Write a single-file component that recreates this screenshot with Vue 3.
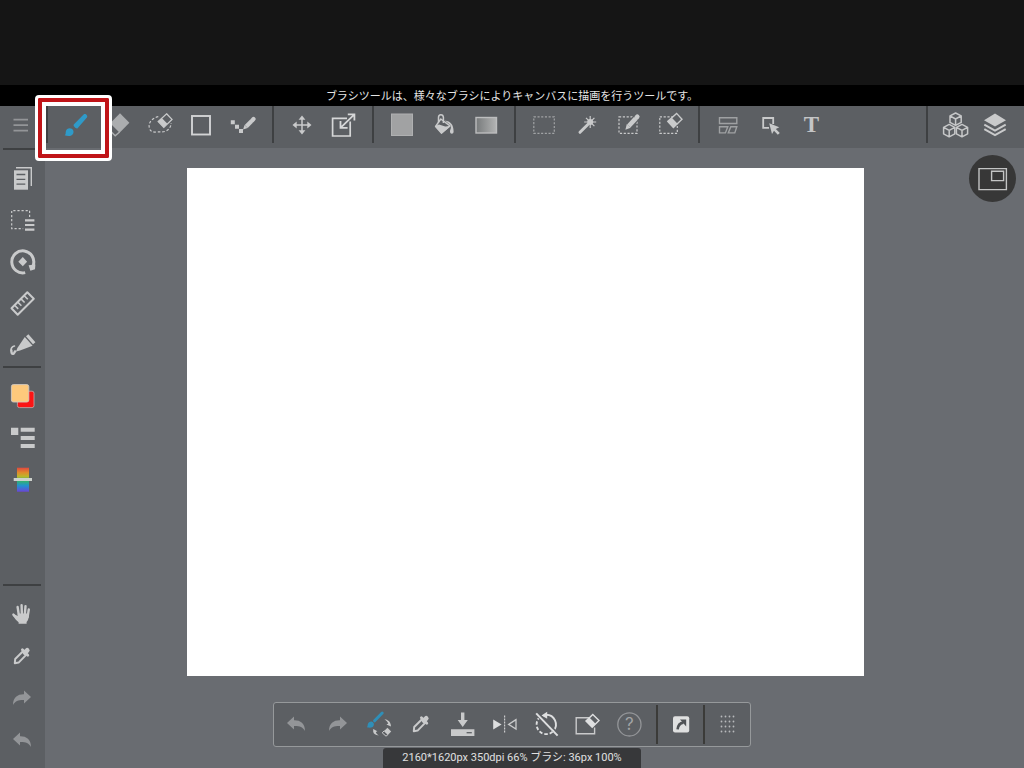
<script setup>
const L = '#c9cacb'
const M = '#abadaf'
const D = '#939598'
const BG = '#5c5f63'

const undoShape = `<path fill="${D}" d="M-9 -1 L-2 -7.5 V-3.8 C4 -4 9 -1 9 7 C7 3 3 1.8 -2 2 V5.5Z"/>`
const dropper = `<path fill="none" stroke="${L}" stroke-width="2" stroke-linejoin="round" d="M-7.2 7.2 L-6.8 3 L1 -4.8 L4.4 -1.4 L-3.4 6.6 Z"/><path stroke="${L}" stroke-width="2.8" stroke-linecap="round" d="M.4 -6.2 L5.8 -.8"/><path stroke="${L}" stroke-width="4.8" stroke-linecap="round" d="M3 -3.4 L5.2 -5.6"/>`
const brush = `<path fill="#2f9ac8" d="M7.6 -10.6 C9.4 -12 12.2 -9.4 10.9 -7.6 L1.6 3.2 C.3 4.4 -3.4 .9 -2.2 -.4Z"/><path fill="#2f9ac8" d="M-6.2 3.2 C-3.4 3.3 -1.6 6 -2.8 8.4 C-4.4 11.6 -8 11.4 -11.4 10.3 C-9.8 9.2 -10.6 8.2 -10.2 6.4 C-9.7 4.3 -8.2 3.2 -6.2 3.2Z"/>`
const cube = (x, y) => `<path transform="translate(${x} ${y})" d="M0 -6 L5.6 -3.1 V3.4 L0 6.4 L-5.6 3.4 V-3.1Z M-5.6 -3.1 L0 0 L5.6 -3.1 M0 0 V6.4"/>`
const dotGrid = [-5, -1, 3, 7].map(x => [-7, -2, 3, 8].map(y => `<circle cx="${x - 1.5}" cy="${y - .5}" r=".9"/>`).join('')).join('')

const icons = {
  menu: `<path stroke="${D}" stroke-width="1.7" d="M-6.5 -5.3 H8 M-6.5 .2 H8 M-6.5 5.6 H8"/>`,
  brush,
  eraser: `<path fill="none" stroke="${M}" stroke-width="1.5" d="M-7 -1.8 L-11 2.5 L-2.8 10.8 L1.6 7"/><path fill="${M}" d="M2 -11.7 L11.4 -2.3 L1.6 7.7 L-7.8 -1.7Z"/>`,
  lassoEraser: `<path fill="none" stroke="${L}" stroke-width="1.2" stroke-dasharray="2.6 1.8" d="M-1.7 -8.3 C-8 -7 -11.5 -2.5 -10.8 2 C-10.5 4.6 -9 7.6 -4 7 C-1 6.5 2 7.6 5 6.4 C9 5 11.2 1.6 11 -2"/><path fill="${BG}" stroke="${L}" stroke-width="1.3" d="M6.6 -11.2 L12 -5.6 L3.8 2.4 L-1.8 -3.4Z"/><path fill="${L}" d="M1.8 -6.9 L7.4 -1.2 L3.8 2.4 L-1.8 -3.4Z"/>`,
  rect: `<rect x="-10" y="-9" width="18" height="18.5" fill="none" stroke="#d2d3d4" stroke-width="1.9"/>`,
  polyline: `<path fill="${L}" d="M-13.2 -4.7h4v4h-4z M-9 -.3h4v4h-4z M-5 4h4v4h-4z"/><path stroke="${L}" stroke-width="4.2" d="M2.2 1.4 L7.4 -3.8"/><path stroke="${L}" stroke-width="4.2" stroke-linecap="round" d="M8.2 -4.6 L9.5 -5.9"/><path fill="${L}" d="M.5 0 L3.6 3 L-.9 4.4Z"/>`,
  move: `<path stroke="${L}" stroke-width="1.5" d="M-7 0H7M0 -7V7"/><path fill="${L}" d="M-9.5 0l4.2-3.4v6.8zM9.5 0l-4.2-3.4v6.8zM0-9.5l-3.4 4.2h6.8zM0 9.5l-3.4-4.2h6.8z"/>`,
  resize: `<path fill="none" stroke="#d6d7d8" stroke-width="1.7" d="M3 -6.6 H-11.4 V11 H6.2 V-3.5"/><path fill="none" stroke="#d6d7d8" stroke-width="1.8" d="M-3.5 2.8 L10.4 -10.6 M-3.5 -4 V2.9 H3.6 M3.8 -10.6 H10.4 V-4.4"/>`,
  fill: `<rect x="-10.5" y="-11" width="21" height="21.5" fill="#a1a2a3" stroke="#afb0b1"/>`,
  bucket: `<path fill="none" stroke="${L}" stroke-width="1.5" stroke-linejoin="round" d="M-3.2 -6 L6 .9 L-2.6 8 L-8.4 1.4Z"/><path fill="${L}" d="M-8.8 1 L-5 -.4 L1.2 1.6 L6.5 1 L-2.4 9 Z"/><path fill="none" stroke="${L}" stroke-width="1.5" d="M-5.5 -2.4 V-7.6 C-5.5 -11.3 -.8 -11.3 -.6 -7.6 V-2"/><path fill="${L}" d="M1 -4.6 C6.5 -3.6 9.6 -1 9.6 6.6 C9.6 9.6 6 9.6 6 6.6 C6 4.6 7.5 3.4 6.6 .2Z"/>`,
  gradient: `<defs><linearGradient id="grayRamp"><stop stop-color="#777a7b"/><stop offset="1" stop-color="#b3b4b4"/></linearGradient></defs><rect x="-10" y="-7.5" width="20.5" height="15.5" fill="url(#grayRamp)" stroke="#bcbdbe" stroke-width="1.4"/>`,
  select: `<rect x="-10.2" y="-8.2" width="20.5" height="16.5" fill="none" stroke="#a1a3a5" stroke-width="1.2" stroke-dasharray="2.1 1.6"/>`,
  wand: `<path stroke="${L}" stroke-width="3" stroke-linecap="round" d="M-6 7.3 L1.6 -.3"/><circle cx="4.2" cy="-3" r="3" fill="${L}"/><path stroke="${L}" stroke-width="1.2" d="M4.2 -9V3M-1.8 -3H10.2M0 -7.2L8.4 1.2M8.4 -7.2L0 1.2"/>`,
  selectPen: `<rect x="-9" y="-8.2" width="18" height="16.5" fill="none" stroke="${L}" stroke-width="1.2" stroke-dasharray="2.2 1.6"/><path stroke="${BG}" stroke-width="7" d="M-1 3 L10 -9"/><path stroke="${L}" stroke-width="4.6" d="M.8 1 L7.6 -6.4"/><path stroke="${L}" stroke-width="4.6" stroke-linecap="round" d="M8.6 -7.5 L9.3 -8.3"/><path fill="${L}" d="M-1.2 -.9 L2.7 2.7 L-2.6 4.8Z"/>`,
  selectEraser: `<rect x="-10.2" y="-8.2" width="17.5" height="16.5" fill="none" stroke="${L}" stroke-width="1.2" stroke-dasharray="2.2 1.6"/><path fill="${BG}" stroke="${L}" stroke-width="1.4" d="M6.6 -11.6 L12 -5.7 L3.4 2.6 L-2.2 -3.6Z"/><path fill="${L}" d="M1.8 -7.2 L7.6 -1.2 L3.4 3.1 L-2.7 -3.2Z"/>`,
  panels: `<path fill="none" stroke="#9fa1a3" stroke-width="1.4" d="M-8.5 -7.3H8.8V-1.5H-8.5Z M-8.5 1.8H-.2L-2.6 7.9H-8.5Z M2.8 1.8H8.8L6.8 7.9H.3Z"/>`,
  operate: `<path fill="none" stroke="${L}" stroke-width="1.8" d="M-1 2.8H-6.8V-7H3.2V-1"/><path fill="${L}" d="M-.8 -1.8 L9.3 2.2 L5.8 4 L9.8 8 L7.8 9.8 L4 5.8 L2 9Z"/>`,
  text: `<text x="-.5" y="7.4" text-anchor="middle" font-family="Liberation Serif, serif" font-weight="700" font-size="23" fill="#c4c5c6">T</text>`,
  cubes: `<g fill="none" stroke="#c6c7c8" stroke-width="1.5" stroke-linejoin="round">${cube(.6, -6)}${cube(-5.8, 5.4)}${cube(7, 5.4)}</g>`,
  layers: `<path fill="${L}" d="M0 -11.4L11 -4.8L0 1.5L-11 -4.8Z"/><path fill="none" stroke="${L}" stroke-width="2" d="M-10.7 -.3L0 5.6L10.7 -.3M-10.7 4.2L0 10.1L10.7 4.2"/>`,
  documents: `<path fill="none" stroke="${L}" stroke-width="1.4" d="M-6 -9.2H9.3V9"/><path fill="${L}" d="M-8 -6.7H6V12.7H-8Z"/><path stroke="${BG}" stroke-width="1.3" d="M-5.5 -2.5H3.3M-5.5 2.3H3.3M-5.5 7.1H3.3"/>`,
  selectMenu: `<path fill="none" stroke="${L}" stroke-width="1.2" stroke-dasharray="2.2 1.9" d="M7.6 -2V-8.4H-10.3V9.6H1.2"/><path stroke="${L}" stroke-width="2.1" d="M3 1.4H12.4M3 6H12.4M3 10.6H12.4"/>`,
  rotate: `<path fill="none" stroke="${L}" stroke-width="3" d="M3.2 11.6 A11 11 0 1 1 11.2 4.4"/><path fill="${L}" d="M6.6 4.2L13.4 3.6L13 8.2L8.4 9.8ZM.8 -3.9L5.1 .7L.8 5.2L-3.7 .7Z"/>`,
  ruler: `<path fill="none" stroke="${L}" stroke-width="2" stroke-linejoin="round" d="M5.3 -10.7 L11.8 -4.3 L-4.3 11.8 L-10.5 5.3Z"/><path stroke="${L}" stroke-width="1.6" d="M-7.4 2.3l3.6 3.6M-4.2 -.9l3.6 3.6M-1 -4.1l3.6 3.6M2.2 -7.3l3.6 3.6"/>`,
  pen: `<path stroke="${L}" stroke-width="3.2" d="M5.2 -9.8L12.2 -1.8"/><path fill="${L}" d="M2.8 -8L10.6 .8L-2 5.6L-6 6.4L-4.6 3Z"/><path fill="none" stroke="${L}" stroke-width="1.7" stroke-linecap="round" d="M-7.6 1C-10 1.6 -11.4 3.4 -10.8 5.4"/><path fill="none" stroke="${L}" stroke-width="2.4" stroke-linecap="round" d="M-10.6 5.4C-10.8 8 -10 9.4 -8.4 8.6C-7.4 8 -7.6 6.8 -6.8 6.4"/>`,
  colors: `<rect x="-4.6" y="-4.8" width="16.6" height="16.4" rx="2" fill="#fb1414" stroke="#c5a9a9" stroke-width=".8"/><rect x="-10.6" y="-11.4" width="17.4" height="17.4" rx="2" fill="#fec97c" stroke="#d2cbc2" stroke-width=".9"/>`,
  list: `<path fill="${L}" d="M-11 -10.2h7.3v7.3h-7.3zM-1.3 -10.2h14v4h-14zM-1.3 -2h14v4h-14zM-1.3 6h14v4h-14z"/>`,
  spectrum: `<defs><linearGradient id="hueRamp" x1="0" y1="0" x2="0" y2="1"><stop stop-color="#e0483f"/><stop offset=".2" stop-color="#e08a2c"/><stop offset=".36" stop-color="#bdb52a"/><stop offset=".55" stop-color="#35b36a"/><stop offset=".75" stop-color="#2291cf"/><stop offset="1" stop-color="#6a45d8"/></linearGradient></defs><rect x="-5" y="-12.3" width="12" height="24" fill="url(#hueRamp)"/><rect x="-8.3" y="-2" width="18.3" height="3" fill="#cdd2cd"/>`,
  hand: `<path fill="none" stroke="${L}" stroke-width="2.4" stroke-linecap="round" d="M-4.4 -7L-3 2M-.4 -8.8L-.1 1M3.5 -7.8L2.8 1M6.8 -4.6L5.6 3M-8.6 .6L-4 5"/><path fill="${L}" d="M-4.4 -.6L6.8 -.6C7 4 6 6.6 4.6 8V9.8H-3.4V8.2C-5.8 6.8 -7.4 4 -9.4 1.6L-7.6 .4L-4 2Z"/>`,
  dropper,
  undo: undoShape,
  redo: `<g transform="scale(-1 1)">${undoShape}</g>`,
  swap: `<path stroke="#2f8fb8" stroke-width="3" stroke-linecap="round" d="M3.2 -11L-4.4 -3.2"/><path fill="#2f8fb8" d="M-7.6 -2.4C-5.6 -2.2 -4.4 0 -5.4 1.8C-6.6 4 -9.4 4 -12.2 3.2C-11 2.4 -11.6 1.6 -11.2 .3C-10.6 -1.6 -9.2 -2.5 -7.6 -2.4Z"/><path fill="${L}" d="M5.4 -4.8C9 -4.4 11.4 -2.2 11.7 .6L12 2.4L7.4 .6L9.3 -.4C8.8 -2 7.2 -3.6 5.4 -4.8ZM-5.8 5L-1.6 7.2L-3.2 8C-2.8 9.4 -1.6 10.6 -.2 11.4C-3.4 11.3 -5.4 9.8 -5.8 7.8Z"/><path fill="none" stroke="${L}" d="M5.4 6.6L3.2 8.8L7 12.2L9.2 10.4"/><path fill="${L}" d="M8.4 3.8L12.2 7.6L8.8 11L5 7.2Z"/>`,
  download: `<path fill="${L}" d="M-2 -11.4H1.4V-4H4.8L-.3 3L-5.3 -4H-2ZM-12 5.3H11.4V12H-12Z"/><path stroke="${BG}" stroke-width="1.3" d="M3.6 8.7H8.8"/>`,
  flip: `<path fill="#dedfe0" d="M-11.8 -4.6L-3.4 .4L-11.8 5.4Z"/><path stroke="${L}" stroke-width="1.2" stroke-dasharray="1.8 1.2" d="M-.4 -8.4V9.4"/><path fill="none" stroke="${L}" stroke-width="1.3" d="M11 -4.4L3.6 .4L11 5Z"/>`,
  resetRotate: `<path fill="none" stroke="#dedfe0" stroke-width="1.9" d="M-1 -9.2A9.7 9.7 0 0 1 6.4 7"/><path fill="none" stroke="#dedfe0" stroke-width="1.9" stroke-dasharray="3.4 2" d="M5.6 7.8A9.7 9.7 0 0 1 -8.3 -5.6"/><path fill="#dedfe0" d="M-5.6 -8.4L.2 -12.2V-5.2Z"/><path stroke="${BG}" stroke-width="1.6" d="M-9.4 -11.4L12 10.4"/><path stroke="#dedfe0" stroke-width="2" d="M-10.8 -10.6L10.6 11.6"/>`,
  clear: `<path fill="none" stroke="${L}" stroke-width="1.4" d="M2.4 -6.2H-11.8V9.8H6.6V3.6"/><path fill="${BG}" stroke="#dedfe0" stroke-width="1.4" d="M4.8 -9.6L11 -3.4L4.2 3.2L-2 -3Z"/><path fill="#dedfe0" d="M1.4 -6.4L7.6 -.2L4.2 3.6L-2.4 -3Z"/>`,
  help: `<circle cx="-.6" cy=".4" r="11.6" fill="none" stroke="${D}" stroke-width="1.3"/><text x="-.6" y="6.4" text-anchor="middle" font-family="Inter, sans-serif" font-size="17" fill="#a2a4a6">?</text>`,
  external: `<rect x="-8" y="-7.8" width="16.2" height="16.4" rx="2" fill="#dfe0e0"/><path fill="none" stroke="#505356" stroke-width="2.6" d="M-3.4 5.4C-3 1.2 -1 -1 2.4 -1.4"/><path fill="#505356" d="M-1 -4.4H5.2V2.4Z"/>`,
  grip: `<g fill="#b8babb">${dotGrid}</g>`
}

const toolGroups = [
  [['brush', 'ブラシ'], ['eraser', '消しゴム'], ['lassoEraser', '投げ縄消しゴム'], ['rect', '図形'], ['polyline', 'ドット']],
  [['move', '移動'], ['resize', '変形']],
  [['fill', '塗りつぶし'], ['bucket', 'バケツ'], ['gradient', 'グラデーション']],
  [['select', '選択'], ['wand', '自動選択'], ['selectPen', '選択ペン'], ['selectEraser', '選択消しゴム']],
  [['panels', 'コマ分割'], ['operate', '操作'], ['text', 'テキスト']]
]
const panelTools = [['cubes', '素材'], ['layers', 'レイヤー']]
const sideTop = [['documents', 'ファイル'], ['selectMenu', '選択メニュー'], ['rotate', '回転'], ['ruler', '定規'], ['pen', 'ペン設定']]
const sideColor = [['colors', '描画色'], ['list', 'ブラシ一覧'], ['spectrum', 'カラー']]
const sideBottom = [['hand', '手のひら'], ['dropper', 'スポイト'], ['redo', 'やり直し'], ['undo', '取り消し']]
const quickTools = [['undo', '取り消し'], ['redo', 'やり直し'], ['swap', 'ブラシ切替'], ['dropper', 'スポイト'], ['download', '保存'], ['flip', '左右反転'], ['resetRotate', '回転リセット'], ['clear', 'レイヤー消去'], ['help', 'ヘルプ']]
</script>

<template>
  <div class="app">
    <div class="letterbox"></div>
    <p class="hint">ブラシツールは、様々なブラシによりキャンバスに描画を行うツールです。</p>

    <header class="toolbar">
      <button class="menu" aria-label="メニュー">
        <svg width="38" height="38" viewBox="-19 -19 38 38" v-html="icons.menu"></svg>
      </button>
      <template v-for="(group, g) in toolGroups" :key="g">
        <i class="rule"></i>
        <div class="group">
          <button v-for="[icon, label] in group" :key="icon" class="tool" :aria-label="label">
            <svg width="42" height="38" viewBox="-21 -19 42 38" v-html="icons[icon]"></svg>
          </button>
          <span v-if="g === 0" class="focus-frame"></span>
        </div>
      </template>
      <i class="rule push"></i>
      <div class="group">
        <button v-for="[icon, label] in panelTools" :key="icon" class="tool narrow" :aria-label="label">
          <svg width="40" height="38" viewBox="-20 -19 40 38" v-html="icons[icon]"></svg>
        </button>
      </div>
    </header>

    <div class="body">
      <aside class="sidebar">
        <i class="bar"></i>
        <button v-for="[icon, label] in sideTop" :key="icon" class="side" :aria-label="label">
          <svg width="45" height="42" viewBox="-22 -21 45 42" v-html="icons[icon]"></svg>
        </button>
        <i class="bar tight"></i>
        <button v-for="[icon, label] in sideColor" :key="icon" class="side" :aria-label="label">
          <svg width="45" height="42" viewBox="-22 -21 45 42" v-html="icons[icon]"></svg>
        </button>
        <i class="bar low"></i>
        <button v-for="[icon, label] in sideBottom" :key="icon" class="side" :aria-label="label">
          <svg width="45" height="42" viewBox="-22 -21 45 42" v-html="icons[icon]"></svg>
        </button>
      </aside>

      <main class="workspace">
        <div class="paper"></div>
        <button class="preview" aria-label="ナビゲーター">
          <svg width="47" height="47" viewBox="0 0 47 47" fill="none" stroke="#c3c4c4" stroke-width="1.4">
            <path d="M10 13.6H37.4V34.6H10Z M22.6 16.2H34.6V25.6H22.6Z" />
          </svg>
        </button>
      </main>
    </div>

    <footer class="dock">
      <div class="quick">
        <div class="quick-main">
          <button v-for="[icon, label] in quickTools" :key="icon" class="quick-tool" :aria-label="label">
            <svg width="40" height="43" viewBox="-20 -21 40 43" v-html="icons[icon]"></svg>
          </button>
        </div>
        <i class="split"></i>
        <button class="quick-tool end" aria-label="外部表示">
          <svg width="40" height="43" viewBox="-20 -21 40 43" v-html="icons.external"></svg>
        </button>
        <i class="split"></i>
        <button class="quick-tool end" aria-label="移動ハンドル">
          <svg width="40" height="43" viewBox="-20 -21 40 43" v-html="icons.grip"></svg>
        </button>
      </div>
      <div class="status">2160*1620px 350dpi 66% ブラシ: 36px 100%</div>
    </footer>
  </div>
</template>

<style>
body {
  margin: 0;
  background: #696c71;
}
</style>

<style scoped>
.app {
  position: relative;
  display: flex;
  flex-direction: column;
  min-height: 100vh;
  background: #696c71;
  font-family: "Liberation Sans", "Noto Sans CJK JP", sans-serif;
}
button {
  display: flex;
  align-items: center;
  justify-content: center;
  padding: 0;
  border: 0;
  background: none;
  cursor: pointer;
}
svg {
  display: block;
  flex: none;
}
.letterbox {
  height: 85px;
  background: #151515;
}
.hint {
  margin: 0;
  background: #000;
  color: #e4e4e4;
  font-family: "Noto Sans CJK JP", sans-serif;
  font-size: 11px;
  line-height: 21px;
  text-align: center;
}
.toolbar {
  position: relative;
  z-index: 2;
  display: flex;
  align-items: flex-start;
  height: 42px;
  padding-right: 9px;
  background: #5c5f63;
}
.menu {
  width: 39px;
  height: 38px;
}
.rule {
  width: 2px;
  height: 37px;
  margin: 0 7px;
  background: #3e4042;
}
.push {
  margin-left: auto;
}
.group {
  position: relative;
  display: flex;
}
.tool {
  width: 42px;
  height: 38px;
}
.narrow {
  width: 40px;
}
.focus-frame {
  position: absolute;
  top: -11px;
  left: -20px;
  width: 71px;
  height: 60px;
  border: 3px solid #fff;
  border-radius: 4px;
  box-shadow: inset 0 0 0 4px #c01418, inset 0 0 0 8px #fff;
  pointer-events: none;
}
.body {
  display: flex;
  flex: 1;
}
.sidebar {
  display: flex;
  flex-direction: column;
  width: 45px;
  padding-bottom: 7px;
  background: #5c5f63;
}
.side {
  width: 100%;
  height: 42px;
}
.bar {
  height: 2px;
  margin: 0 4px 6px 3px;
  background: #3e4042;
}
.tight {
  margin-bottom: 7px;
}
.low {
  margin-top: auto;
  margin-bottom: 7px;
}
.workspace {
  position: relative;
  display: flex;
  flex: 1;
  padding: 20px 160px 92px 142px;
}
.paper {
  flex: 1;
  background: #fff;
}
.preview {
  position: absolute;
  top: 7px;
  right: 8px;
  width: 47px;
  height: 47px;
  border-radius: 50%;
  background: #373737;
}
.dock {
  position: absolute;
  right: 0;
  bottom: 0;
  left: 0;
  display: flex;
  flex-direction: column;
  align-items: center;
  gap: 1px;
  pointer-events: none;
}
.quick {
  display: flex;
  align-items: center;
  box-sizing: border-box;
  width: 478px;
  max-width: 100%;
  padding-left: 1px;
  border: 1px solid #96999b;
  border-radius: 3px;
  background: #5c5f63;
  pointer-events: auto;
}
.quick-main {
  display: flex;
  flex: 1;
  margin-right: 5px;
}
.quick-tool {
  flex: 1;
  height: 43px;
  min-width: 0;
}
.end {
  flex: none;
  width: 45px;
}
.split {
  width: 2px;
  height: 39px;
  background: #3b3b39;
}
.status {
  padding: 0 19px;
  border-radius: 3px 3px 0 0;
  background: #37383a;
  color: #e0e0e0;
  font-family: Roboto, "Noto Sans CJK JP", sans-serif;
  font-size: 11px;
  line-height: 20px;
  white-space: nowrap;
}
</style>
